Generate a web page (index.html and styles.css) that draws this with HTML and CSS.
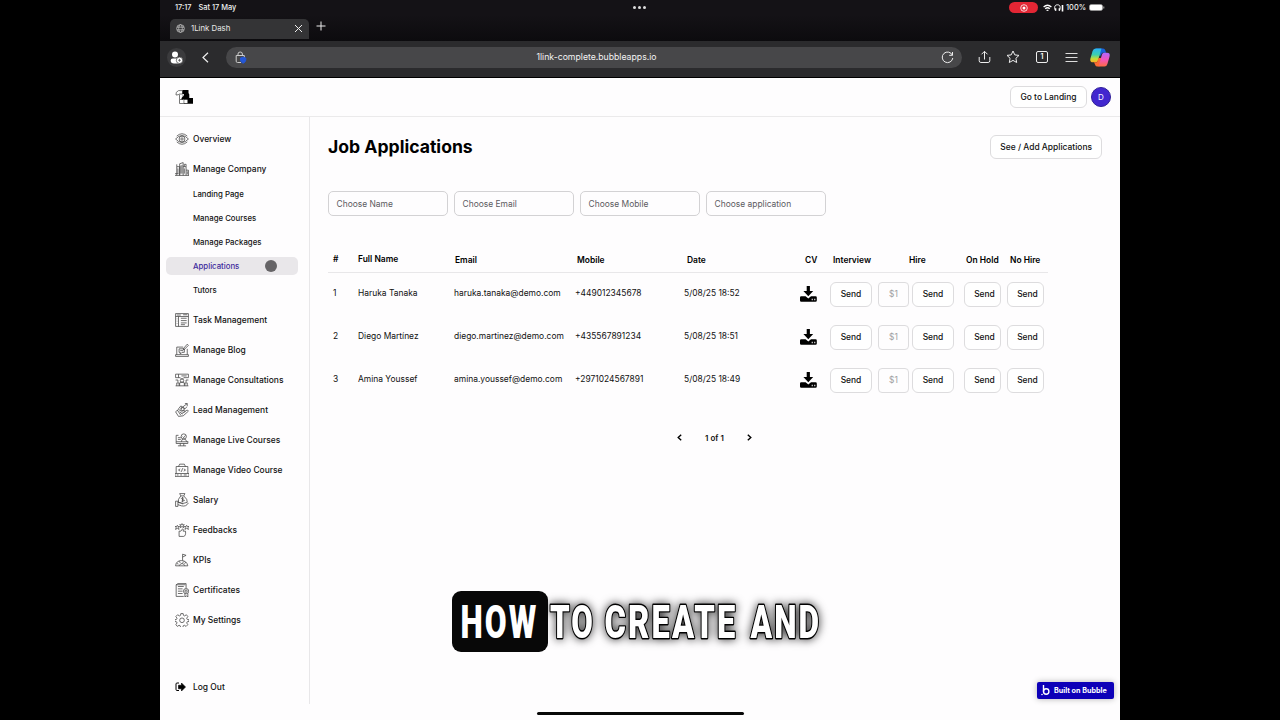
FILE: index.html
```html
<!DOCTYPE html>
<html lang="en">
  <head>
    <meta charset="UTF-8" />
    <meta name="viewport" content="width=device-width, initial-scale=1.0" />
    <title>1Link Dash</title>
    <link rel="stylesheet" href="styles.css">
  </head>

  <body>
    <svg class="defs" width="0" height="0">
      <symbol id="download" viewBox="0 0 17 16">
        <path d="M6.7 0h3.2v5h3.3L8.3 10.2 3.4 5h3.3z"/>
        <path d="M1.2 10.3h4.4l2.7 2.2 2.7-2.2h4.6q1.2 0 1.2 1.2v3q0 1.2-1.2 1.2H1.2Q0 15.7 0 14.500v-3q0-1.200 1.200-1.200z"/>
        <path d="M11.600 12.800h1.400v1.400h-1.400zM14 12.800h1.400v1.400H14z" fill="#bbb"/>
      </symbol>
    </svg>

    <div class="tablet">
      <!-- Status bar -->
      <div class="status-bar">
        <span class="time">17:17</span>
        <span>Sat 17 May</span>
        <div class="dots"><i></i><i></i><i></i></div>
        <div class="status-right">
          <span class="rec"><svg width="8" height="8" viewBox="0 0 8 8"><circle cx="4" cy="4" r="3.3" fill="none" stroke="#fff" stroke-width=".8"/><circle cx="4" cy="4" r="1.500" fill="#fff"/></svg></span>
          <svg class="wifi" width="9" height="8" viewBox="0 0 9 8" fill="none" stroke="#fff" stroke-width="1.300"><path d="M.6 3Q4.500-.5 8.400 3M2.200 4.800Q4.500 2.700 6.800 4.800"/><path d="M3.600 6.100h1.800L4.500 7z" fill="#fff" stroke-width=".6"/></svg>
          <svg class="phones" width="10" height="8" viewBox="0 0 10 8" fill="none" stroke="#fff"><path d="M1.300 6.500C-.3 2 1.500.8 3.500.8S7 2 5.600 6.500"/><path d="M1.700 4.300v2.500M5.300 4.300v2.500" stroke-width="1.300"/><path d="M8.500 1v6.500" stroke-width="1.600"/></svg>
          <span>100%</span>
          <svg class="battery" width="16" height="7" viewBox="0 0 16 7"><rect x=".4" y=".4" width="13.200" height="6.200" rx="2" fill="#fff" stroke="#999" stroke-width=".6"/><path d="M14.800 2.500v2" stroke="#aaa"/></svg>
        </div>
      </div>

      <!-- Tabs -->
      <div class="tabs">
        <div class="tab">
          <svg width="9" height="9" viewBox="0 0 10 10" fill="none" stroke="#bbb" stroke-width=".9"><circle cx="5" cy="5" r="4.300"/><ellipse cx="5" cy="5" rx="2" ry="4.300"/><path d="M1 3.500h8M1 6.500h8"/></svg>
          <span>1Link Dash</span>
          <svg class="close" width="9" height="9" viewBox="0 0 9 9" stroke="#eee"><path d="M1 1l7 7M8 1L1 8"/></svg>
        </div>
        <svg class="new-tab" width="10" height="10" viewBox="0 0 10 10" stroke="#eee"><path d="M5 .5v9M.5 5h9"/></svg>
      </div>

      <!-- Toolbar -->
      <div class="toolbar">
        <div class="profile">
          <svg width="13" height="13" viewBox="0 0 13 13"><circle cx="5" cy="3.500" r="3" fill="#fff"/><path d="M.7 9.500q0-2 2-2H9v5H4Q.7 12.500.7 9.500z" fill="#fff"/><circle cx="9.500" cy="9.300" r="3.200" fill="#fff" stroke="#444" stroke-width=".7"/><path d="M9.500 7.900v2.800M8.100 9.300h2.800" stroke="#555" stroke-width=".8"/></svg>
        </div>
        <svg class="back" width="7" height="11" viewBox="0 0 7 11" fill="none" stroke="#eee" stroke-width="1.200"><path d="M6 .8L1 5.500l5 4.700"/></svg>
        <div class="address">
          <svg class="lock" width="12" height="13" viewBox="0 0 12 13" fill="none" stroke="#ccc"><path d="M6 11.500H2.500q-1.300 0-1.300-1.300V4.500H9.300V7M3 4.300V3q0-2 2.200-2t2.200 2v1.300"/><path d="M5.500 7L8 6.200l2.800.8v2q0 2-2.700 3.300Q5.500 11 5.500 9z" fill="#2457d6" stroke="#2457d6"/></svg>
          <span class="url">1link-complete.bubbleapps.io</span>
          <svg class="reload" width="13" height="13" viewBox="0 0 13 13" fill="none" stroke="#eee"><path d="M11.400 4.200A5.300 5.300 0 1 0 11.800 7M11.500 1v3.300H8.200"/></svg>
        </div>
        <svg class="share" width="13" height="14" viewBox="0 0 13 14" fill="none" stroke="#eee"><path d="M6.500 9.500V1.500M3.500 4.300l3-3 3 3M1.200 7v3.800q0 1.700 1.700 1.700h7.200q1.700 0 1.700-1.700V7"/></svg>
        <svg class="star" width="14" height="14" viewBox="0 0 14 14" fill="none" stroke="#eee" stroke-linejoin="round"><path d="M7 1l1.800 3.900 4.200.5-3.100 2.900.8 4.200L7 10.400l-3.700 2.100.8-4.200L1 5.400l4.200-.5z"/></svg>
        <div class="tab-count">1</div>
        <svg class="menu" width="13" height="11" viewBox="0 0 13 11" stroke="#ddd"><path d="M.5 1.500h12M.5 5.500h12M.5 9.500h12"/></svg>
        <svg class="copilot" width="20" height="19" viewBox="0 0 20 19">
          <defs>
            <linearGradient id="cl" x1="0" y1="0" x2="0" y2="1"><stop offset="0" stop-color="#2ab4f5"/><stop offset=".45" stop-color="#3bd0b0"/><stop offset=".75" stop-color="#c7dc35"/><stop offset="1" stop-color="#ffae22"/></linearGradient>
            <linearGradient id="cr" x1="0" y1="0" x2="0" y2="1"><stop offset="0" stop-color="#ae68ff"/><stop offset=".5" stop-color="#f453bc"/><stop offset="1" stop-color="#ff6b42"/></linearGradient>
          </defs>
          <path d="M6 .5h7q1.800 0 2.400 2l.7 2.200h-4l-1.600 3h-3z" fill="#1862dc"/>
          <path d="M5.500.5H11.500L8 12.500q-.5 1.800-2 1.800H3q-3.500 0-2.500-4L2.600 3Q3.400.5 5.500.5z" fill="url(#cl)"/>
          <path d="M4 14.300h3L8.500 10h3l-2.200 8.500H7q-1.500 0-2-2z" fill="#ff6b32"/>
          <path d="M14.500 18.500H8.500l3.500-12q.5-1.800 2-1.800h3q3.500 0 2.500 4l-2.100 7.300q-.8 2.500-2.900 2.500z" fill="url(#cr)"/>
        </svg>
      </div>

      <!-- Page header -->
      <div class="header">
        <svg class="logo" width="19" height="14" viewBox="0 0 19 14"><path d="M3.500.6h4V4h-3q-1 1-3.500 1Q.3 2 3.500.6zM4.500 4.500V9.500H8V4.500M4.500 9.500v4H9v-4" fill="#fff" stroke="#555" stroke-width=".8"/><path d="M7.500 0h6v3l.8 1.500V8H18v5.800H9V9.500H6.500V8L9 5.500V4H7.500z"/><path d="M9.200 9.700h3.300v3.400H9.200z" fill="#fff"/></svg>
        <button class="btn landing">Go to Landing</button>
        <div class="avatar">D</div>
      </div>

      <div class="body">
        <div class="sidebar">
          <a class="item"><svg viewBox="0 0 24 24"><path d="M1 12Q12 0 23 12Q12 24 1 12zM3 7Q12-1 21 7M3 17Q12 25 21 17"/><circle cx="12" cy="12" r="5"/><circle cx="12" cy="12" r="2"/></svg>Overview</a>
          <a class="item"><svg viewBox="0 0 24 24"><path d="M0 23h24M3 23V8h5v15M8 23V3l6-2v22M14 8h5v15M19 14h4v9M5 11v9M10 6v14M12 5v15M16 11v9M0 20h6M21 16v5M3 8V4M16 8V4h3v4"/></svg>Manage Company</a>
          <div class="submenu">
            <a class="subitem">Landing Page</a>
            <a class="subitem">Manage Courses</a>
            <a class="subitem">Manage Packages</a>
            <a class="subitem active">Applications<span class="touch"></span></a>
            <a class="subitem">Tutors</a>
          </div>
          <a class="item"><svg viewBox="0 0 24 24"><path d="M1 1h22v22H1zM1 6h22M6 6v17M3 3.500h7M10 9h10M10 13h10M10 17h10M10 20h7M3 10h1M3 14h1M3 18h1M14 3h7"/></svg>Task Management</a>
          <a class="item"><svg viewBox="0 0 24 24"><path d="M3 20V7h11M21 10v10M1 20h22v3H1zM7 10h9v6h-4l-3 3v-3H7zM14 10l7-8 2 2-8 8zM9 13h5"/></svg>Manage Blog</a>
          <a class="item"><svg viewBox="0 0 24 24"><path d="M1 2h22v6h-8l-3 3-3-3H1zM6 2v6M11 5h9M1 22h22M3 22v-5h4v5M17 22v-5h4v5M8 22v-5q4-3 8 0v5M1 12h4v4M23 12h-4v4"/><circle cx="12" cy="13" r="3"/></svg>Manage Consultations</a>
          <a class="item"><svg viewBox="0 0 24 24"><path d="M1 15l5-4 5 3 5-1q3 1 0 3l-5 2M1 15l5 8 8-1 9-8q-1-3-4-1l-4 3M6 10l4-5 3 2 8-6M17 1h4v4M10 10l3-2 4 2 4-4M8 15l5 4M4 12l6 9"/><circle cx="13" cy="10" r="3"/></svg>Lead Management</a>
          <a class="item"><svg viewBox="0 0 24 24"><path d="M6 4H2v14h20v-4M2 15h20M9 18v4M15 18v4M5 22h14M5 8h5M5 11h5M11 15q0-5 4-5t5 5"/><circle cx="15" cy="6" r="4.500"/><path d="M13 6l2 2 3-4"/></svg>Manage Live Courses</a>
          <a class="item"><svg viewBox="0 0 24 24"><path d="M2 18V6h20v12M0 18h24v5H0zM6 6l2-4h8l2 4M9 10l-3 2 3 2M15 10l3 2-3 2M13 9l-2 6M3 20.500h3M9 20.500h3M15 20.500h5"/></svg>Manage Video Course</a>
          <a class="item"><svg viewBox="0 0 24 24"><path d="M10 5L8 1h9l-2 4zM10 5Q4 11 6 16q7 4 15 0Q22 11 15 5M1 14v9h4v-9zM5 20l6 2q8 2 12-5M5 16l5 1 4 2M15 9q-4-2-4 0t4 3-4 2M13 7v9"/></svg>Salary</a>
          <a class="item"><svg viewBox="0 0 24 24"><path d="M7 14h3l3-4q2 0 1 4h4q1 8-3 9H7zM12 1l1 2h3l-2 2 1 3-3-2-3 2 1-3-2-2h3zM4 4l1 2h3L6 8l1 3-3-2-3 2 1-3-2-2h3zM20 4l1 2h3l-2 2 1 3-3-2-3 2 1-3-2-2h3z"/></svg>Feedbacks</a>
          <a class="item"><svg viewBox="0 0 24 24"><path d="M1 22q1-9 10-9t11 9zM7 22q2-4 5-4t5 4M12 18l4-4M13 13V2l6 2-6 3M3 18l3 1M7 14l2 3M19 16l-3 2"/></svg>KPIs</a>
          <a class="item"><svg viewBox="0 0 24 24"><path d="M15 23H2V3l3-2h14v8M5 6h10M5 10h8M5 14h8M5 18h8M17 18v6l3-2 2 2v-6M2 3h16"/><circle cx="19" cy="14" r="4.500"/><circle cx="19" cy="14" r="2"/></svg>Certificates</a>
          <a class="item"><svg viewBox="0 0 24 24" class="gear"><path d="M9.500 4L10 1h4l.5 3 2 1 3-2 2.500 3-2 3 1 2 3 .5v3l-3 .5-1 2 2 3-3 3-3-2-2 1-.5 3h-4l-.5-3-2-1-3 2-2.500-3 2-3-1-2-3-.5v-3l3-.5 1-2-2-3 3-3 3 2z"/><circle cx="12" cy="12.500" r="4"/></svg>My Settings</a>
          <a class="item logout"><svg viewBox="0 0 24 24"><path d="M8 4H4Q2 4 2 6v11q0 2 2 2h4" stroke-width="2"/><path d="M7 8.500h6V4l8 8-8 8v-4.500H7z" fill="#000"/></svg>Log Out</a>
        </div>

        <div class="content">
          <div class="title-row">
            <h1>Job Applications</h1>
            <button class="btn">See / Add Applications</button>
          </div>

          <div class="filters">
            <div class="filter">Choose Name</div>
            <div class="filter">Choose Email</div>
            <div class="filter">Choose Mobile</div>
            <div class="filter">Choose application</div>
          </div>

          <div class="table">
            <div class="row head">
              <span class="up">#</span>
              <span class="up">Full Name</span>
              <span class="h-email">Email</span>
              <span class="h-mobile">Mobile</span>
              <span class="h-date">Date</span>
              <span class="h-cv">CV</span>
              <span class="h-int">Interview</span>
              <span class="h-hire">Hire</span>
              <span class="h-hold">On Hold</span>
              <span class="h-no">No Hire</span>
            </div>
            <div class="row">
              <span>1</span><span>Haruka Tanaka</span><span class="email">haruka.tanaka@demo.com</span><span>+449012345678</span><span>5/08/25 18:52</span>
              <svg class="cv"><use href="#download"/></svg>
              <button class="send">Send</button>
              <div class="hire"><span class="amount">$1</span><button class="send">Send</button></div>
              <button class="send narrow">Send</button>
              <button class="send narrow">Send</button>
            </div>
            <div class="row">
              <span>2</span><span>Diego Martínez</span><span class="email">diego.martinez@demo.com</span><span>+435567891234</span><span>5/08/25 18:51</span>
              <svg class="cv"><use href="#download"/></svg>
              <button class="send">Send</button>
              <div class="hire"><span class="amount">$1</span><button class="send">Send</button></div>
              <button class="send narrow">Send</button>
              <button class="send narrow">Send</button>
            </div>
            <div class="row">
              <span>3</span><span>Amina Youssef</span><span class="email">amina.youssef@demo.com</span><span>+2971024567891</span><span>5/08/25 18:49</span>
              <svg class="cv"><use href="#download"/></svg>
              <button class="send">Send</button>
              <div class="hire"><span class="amount">$1</span><button class="send">Send</button></div>
              <button class="send narrow">Send</button>
              <button class="send narrow">Send</button>
            </div>
          </div>

          <div class="pager">
            <svg width="5" height="7" viewBox="0 0 5 7"><path d="M4.200.7L1.200 3.500l3 2.800"/></svg>
            <span>1 of 1</span>
            <svg width="5" height="7" viewBox="0 0 5 7"><path d="M.8.7l3 2.800-3 2.800"/></svg>
          </div>
        </div>
      </div>

      <!-- Overlays -->
      <div class="caption">
        <div class="word-box"></div>
        <svg width="400" height="80" viewBox="0 0 400 80">
          <text transform="translate(20.500 58) scale(.69 1)">HOW</text>
          <g class="outlined">
            <text transform="translate(110 58) scale(.68 1)">TO</text>
            <text transform="translate(164.500 58) scale(.71 1)">CREATE</text>
            <text transform="translate(310.500 58) scale(.69 1)">AND</text>
          </g>
        </svg>
      </div>
      <div class="bubble-badge">
        <svg width="9" height="11" viewBox="0 0 9 11" fill="none" stroke="#fff" stroke-width="1.400"><path d="M2.500 0v6.500"/><circle cx="5.200" cy="6.500" r="2.700"/><circle cx="1" cy="9.500" r=".5" fill="#fff" stroke-width=".6"/></svg>
        Built on Bubble
      </div>
      <div class="home-bar"></div>
    </div>
  </body>
</html>
```

FILE: styles.css
```css
* {
  margin: 0;
  padding: 0;
  box-sizing: border-box;
}

body {
  background: #000;
  font-family: Inter, "Liberation Sans", sans-serif;
  font-size: 8.45px;
  color: #111;
  overflow: hidden;
}

.defs {
  position: absolute;
}

svg {
  flex-shrink: 0;
}

.tablet {
  position: relative;
  width: 960px;
  height: 720px;
  margin: 0 auto;
  background: #fefdfe;
  display: flex;
  flex-direction: column;
}

/* Status bar */
.status-bar {
  height: 15px;
  background: #141216;
  color: #f2f2f2;
  display: flex;
  align-items: center;
  padding: 0 15px 0 15px;
  font-size: 7.4px;
  font-weight: 500;
}

.time {
  margin-right: 7px;
}

.dots {
  display: flex;
  gap: 2px;
  margin-left: 397px;
}

.dots i {
  width: 3px;
  height: 3px;
  border-radius: 50%;
  background: #ddd;
}

.status-right {
  display: flex;
  align-items: center;
  margin-left: auto;
}

.rec {
  width: 29px;
  height: 11px;
  border-radius: 6px;
  background: #e32634;
  display: flex;
  align-items: center;
  justify-content: center;
  margin-right: 5px;
}

.phones {
  margin: 0 2px;
}

.battery {
  margin-left: 3px;
}

/* Tabs */
.tabs {
  height: 26px;
  background: linear-gradient(#141216, #0c0b0e);
  display: flex;
  align-items: flex-start;
  padding: 4px 0 0 10px;
}

.tab {
  width: 139px;
  height: 20px;
  border-radius: 5px 5px 0 0;
  background: #343436;
  color: #e8e8e8;
  display: flex;
  align-items: center;
  padding: 0 6px 2px;
  font-size: 7.8px;
}

.tab span {
  margin-left: 6px;
  flex: 1;
}

.new-tab {
  margin: 2px 0 0 7px;
}

/* Toolbar */
.toolbar {
  height: 37px;
  background: #2b2b2d;
  border-bottom: 1px solid #000;
  display: flex;
  align-items: center;
  padding: 0 10px 4px 7px;
}

.profile {
  width: 19px;
  height: 19px;
  border-radius: 50%;
  background: #3b3b3d;
  display: flex;
  align-items: center;
  justify-content: center;
}

.back {
  margin: 0 17px 0 16px;
}

.address {
  width: 736px;
  height: 21px;
  border-radius: 11px;
  background: #474749;
  display: flex;
  align-items: center;
  padding: 0 8px 0 9px;
}

.url {
  flex: 1;
  text-align: center;
  color: #f3f3f3;
  font-size: 8.7px;
  padding: 0 0 1px 5px;
}

.share {
  margin-left: 16px;
}

.star {
  margin-left: 15px;
}

.tab-count {
  width: 12px;
  height: 12px;
  border: 1px solid #eee;
  border-radius: 2px;
  color: #fff;
  font-size: 7px;
  font-weight: 600;
  line-height: 10px;
  text-align: center;
  margin-left: 16px;
}

.menu {
  margin-left: 17px;
}

.copilot {
  margin-left: auto;
}

/* Page header */
.header {
  height: 39px;
  border-bottom: 1px solid #ebeaeb;
  display: flex;
  align-items: center;
  padding: 0 9px 0 15px;
}

.btn {
  height: 24px;
  padding: 0 9px;
  border: 1px solid #dddcde;
  border-radius: 6px;
  background: #fff;
  color: #111;
  font-family: inherit;
  font-size: 8.45px;
  font-weight: 500;
  white-space: nowrap;
}

.landing {
  width: 77px;
  height: 22px;
  margin-left: auto;
  padding-bottom: 1px;
}

.avatar {
  width: 20px;
  height: 20px;
  border-radius: 50%;
  background: #4227cf;
  border: 1px solid #30209a;
  color: #fff;
  font-size: 8px;
  display: flex;
  align-items: center;
  justify-content: center;
  margin-left: 4px;
}

.body {
  height: 587px;
  display: flex;
}

/* Sidebar */
.sidebar {
  width: 150px;
  border-right: 1px solid #e8e7e9;
  padding: 6.6px 0 0 6px;
  display: flex;
  flex-direction: column;
}

.item {
  height: 30px;
  flex-shrink: 0;
  display: flex;
  align-items: center;
  padding-left: 9px;
  font-weight: 500;
}

.item svg {
  width: 14px;
  height: 14px;
  margin-right: 4px;
  fill: none;
  stroke: #444;
  stroke-width: 1.3;
}

.submenu {
  margin: -1.6px 0 -0.4px;
}

.subitem {
  position: relative;
  width: 132px;
  height: 18px;
  margin: 3px 0 6px;
  border-radius: 5px;
  padding-left: 27px;
  display: flex;
  align-items: center;
  font-size: 7.8px;
  font-weight: 500;
}

.subitem.active {
  background: #e9e7ea;
  color: #3d2a9c;
}

.touch {
  position: absolute;
  left: 99px;
  top: 3px;
  width: 12px;
  height: 12px;
  border-radius: 50%;
  background: #666467;
}

.logout {
  margin-top: auto;
  margin-bottom: 2px;
}

.item.logout svg {
  width: 12px;
  height: 12px;
  margin-right: 6px;
  stroke: #000;
}

/* Content */
.content {
  flex: 1;
  padding: 17px 18px 0;
}

.title-row {
  height: 25px;
  display: flex;
  align-items: center;
  justify-content: space-between;
}

h1 {
  font-size: 17.6px;
  font-weight: 700;
  color: #000;
}

.filters {
  display: flex;
  gap: 6px;
  margin-top: 32px;
}

.filter {
  width: 120px;
  height: 25px;
  border: 1px solid #d3d2d4;
  border-radius: 5px;
  padding: 0 7.5px;
  color: #5c5b5e;
  line-height: 24px;
}

.table {
  width: 720px;
  margin-top: 32px;
}

.row {
  height: 43.2px;
  display: grid;
  grid-template-columns: 25px 96px 121px 109px 115px 31px 48px 86px 43px 41px;
  align-items: center;
  padding-left: 5px;
  white-space: nowrap;
}

.row > span {
  padding-bottom: 3px;
}

.row.head {
  height: 25px;
  border-bottom: 1px solid #e8e7e9;
  font-weight: 600;
  color: #000;
}

.row.head > span {
  padding-bottom: 1px;
}

.row.head .up {
  padding-bottom: 2px;
}

.h-email { padding-left: 1px; }
.h-mobile { padding-left: 2px; }
.h-date { padding-left: 3px; }
.h-cv { padding-left: 6px; }
.h-int { padding-left: 3px; }
.h-hire { padding-left: 31px; }
.h-hold { padding-left: 2px; }
.h-no { padding-left: 3px; }

.cv {
  width: 17px;
  height: 16px;
  margin: 0 0 2px 1px;
}

.send {
  width: 42px;
  height: 25px;
  border: 1px solid #dddcde;
  border-radius: 6px;
  background: #fff;
  color: #111;
  font-family: inherit;
  font-size: 8.45px;
  font-weight: 500;
  padding-bottom: 1px;
}

.send.narrow {
  width: 37px;
  padding-left: 4px;
}

.hire {
  display: flex;
  gap: 3px;
}

.amount {
  width: 31px;
  height: 25px;
  border: 1px solid #dddcde;
  border-radius: 4px;
  color: #a09fa2;
  line-height: 23px;
  text-align: center;
}

.pager {
  display: flex;
  align-items: center;
  gap: 23px;
  margin: 30px 0 0 349px;
  font-weight: 600;
  font-size: 8px;
}

.pager svg {
  fill: none;
  stroke: #000;
  stroke-width: 1.4;
}

/* Overlays */
.caption {
  position: absolute;
  left: 280px;
  top: 580px;
  width: 400px;
  height: 80px;
}

.word-box {
  position: absolute;
  left: 12px;
  top: 11px;
  width: 96px;
  height: 61px;
  border-radius: 9px;
  background: #080808;
}

.caption svg {
  position: absolute;
  left: 0;
  top: 0;
  overflow: visible;
}

.caption text {
  font-family: Roboto, sans-serif;
  font-size: 46px;
  font-weight: 900;
  letter-spacing: 3px;
  fill: #fff;
}

.outlined {
  filter: drop-shadow(0 0 5px rgba(0, 0, 0, 0.8));
}

.outlined text {
  stroke: #000;
  stroke-width: 2.5px;
  stroke-linejoin: round;
  vector-effect: non-scaling-stroke;
  paint-order: stroke;
}

.bubble-badge {
  position: absolute;
  left: 877px;
  top: 682px;
  width: 77px;
  height: 17px;
  border-radius: 2px;
  background: #0d00b8;
  box-shadow: 0 0 6px rgba(0, 0, 0, 0.3);
  color: #fff;
  display: flex;
  align-items: center;
  gap: 4px;
  padding-left: 4px;
  font-size: 7.2px;
  font-weight: 700;
  white-space: nowrap;
}

.home-bar {
  position: absolute;
  left: 377px;
  top: 712px;
  width: 207px;
  height: 3px;
  border-radius: 2px;
  background: #080808;
}
```
